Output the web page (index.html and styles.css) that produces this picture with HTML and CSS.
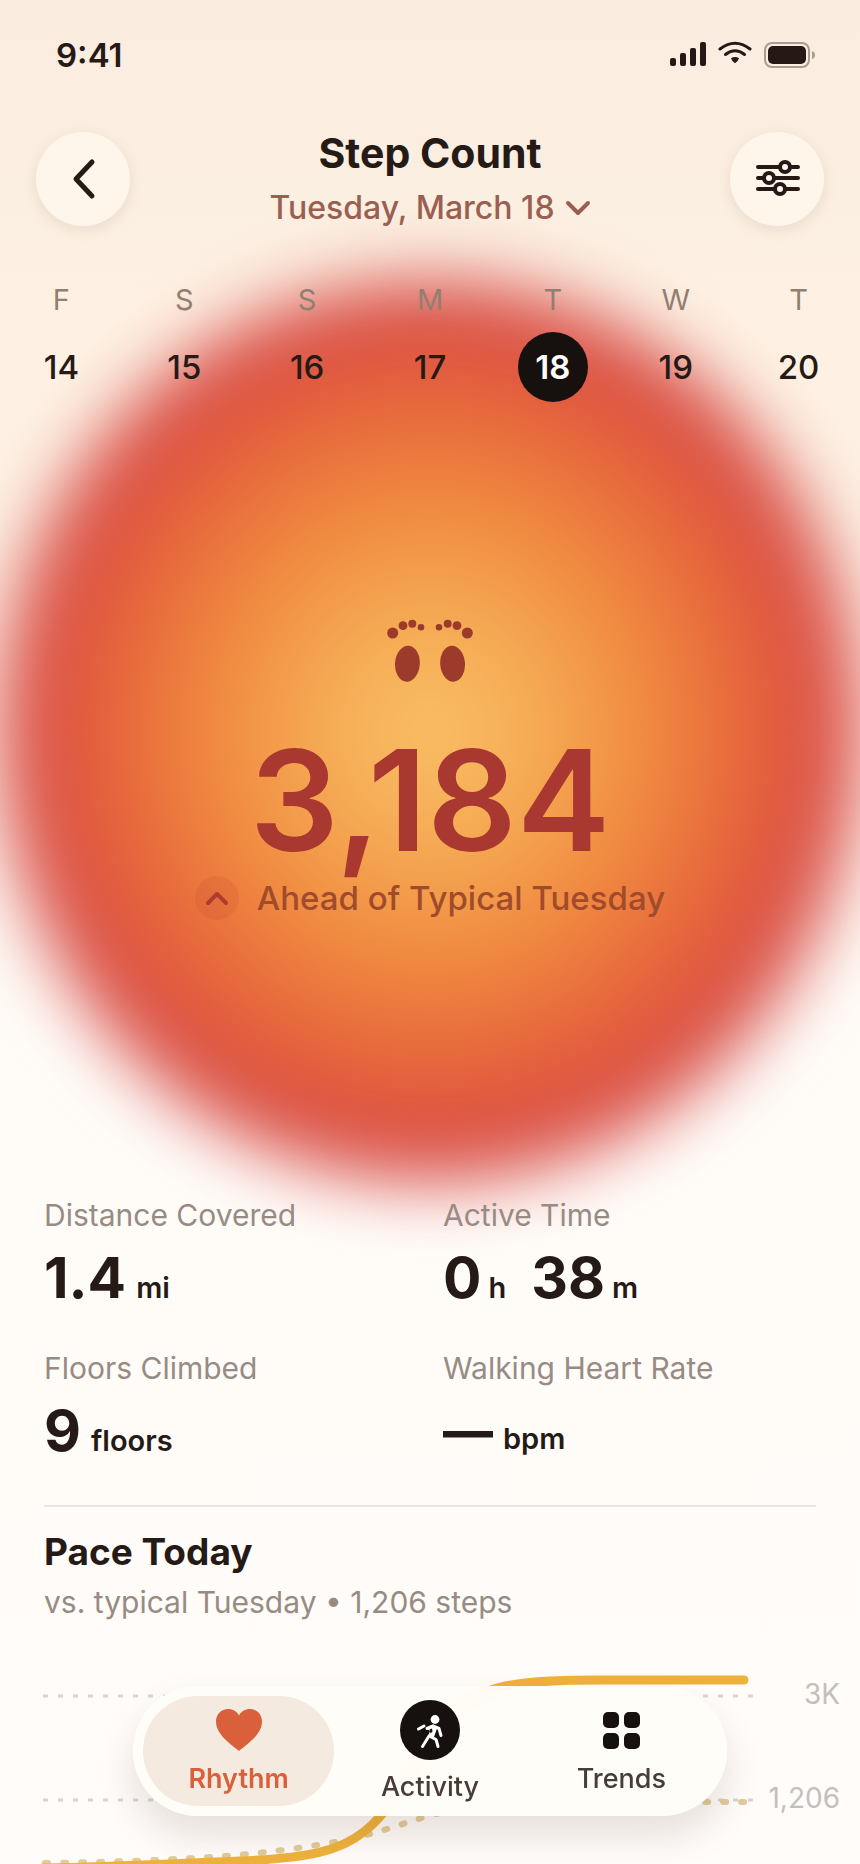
FILE: index.html
```html
<!DOCTYPE html>
<html lang="en">
<head>
  <meta charset="UTF-8">
  <meta name="viewport" content="width=device-width, initial-scale=1">
  <title>Step Count</title>
  <link rel="stylesheet" href="styles.css">
</head>
<body>

<div class="screen">
  <div class="orb"></div>

  <div class="status-bar">
    <span class="time">9:41</span>
    <svg class="status-icons" width="146" height="28" viewBox="0 0 146 28" aria-hidden="true">
      <g fill="#251815">
        <rect x="0" y="17" width="6" height="8" rx="2"/>
        <rect x="10" y="12" width="6" height="13" rx="2"/>
        <rect x="20" y="7" width="6" height="18" rx="2"/>
        <rect x="30" y="1" width="6" height="24" rx="2"/>
        <path d="M61 17.200Q65 14.800 69 17.200Q68.500 19.500 65 22.200Q61.500 19.500 61 17.200Z"/>
        <rect x="98" y="5" width="38" height="18" rx="5"/>
      </g>
      <g fill="none" stroke="#251815" stroke-width="3" stroke-linecap="round">
        <path d="M50 8Q65 -3.500 80 8"/>
        <path d="M55.500 13.500Q65 6 74.500 13.500"/>
      </g>
      <rect x="95" y="2" width="44" height="24" rx="7" fill="none" stroke="#a99c92" stroke-width="2"/>
      <path d="M142 10Q145 11 145 14T142 18Z" fill="#a99c92"/>
    </svg>
  </div>

  <header class="header">
    <button class="round-btn" aria-label="Back">
      <svg width="46" height="46" viewBox="0 0 46 46" aria-hidden="true">
        <path d="M32 6L16 23L32 40" fill="none" stroke="#251b14" stroke-width="5" stroke-linecap="round" stroke-linejoin="round"/>
      </svg>
    </button>
    <div class="heading">
      <h1>Step Count</h1>
      <button class="date-btn">
        Tuesday, March 18
        <svg width="26" height="16" viewBox="0 0 26 16" aria-hidden="true">
          <path d="M3 3L13 13L23 3" fill="none" stroke="#9a5f50" stroke-width="4" stroke-linecap="round" stroke-linejoin="round"/>
        </svg>
      </button>
    </div>
    <button class="round-btn" aria-label="Filters">
      <svg width="46" height="46" viewBox="0 0 46 46" aria-hidden="true">
        <g stroke="#251815" stroke-width="4" stroke-linecap="round">
          <path d="M4 11H44M4 22H44M4 33H44"/>
        </g>
        <g fill="#fef6ea" stroke="#251815" stroke-width="4">
          <circle cx="31" cy="11" r="5"/>
          <circle cx="15" cy="22" r="5"/>
          <circle cx="26" cy="33" r="5"/>
        </g>
      </svg>
    </button>
  </header>

  <nav class="week" aria-label="Days">
    <a href="#" class="day"><span class="weekday">F</span><span class="num">14</span></a>
    <a href="#" class="day"><span class="weekday">S</span><span class="num">15</span></a>
    <a href="#" class="day"><span class="weekday">S</span><span class="num">16</span></a>
    <a href="#" class="day"><span class="weekday">M</span><span class="num">17</span></a>
    <a href="#" class="day active"><span class="weekday">T</span><span class="num">18</span></a>
    <a href="#" class="day"><span class="weekday">W</span><span class="num">19</span></a>
    <a href="#" class="day"><span class="weekday">T</span><span class="num">20</span></a>
  </nav>

  <section class="hero">
    <svg class="feet" width="90" height="64" viewBox="0 0 90 64" fill="#9c3a2b" aria-hidden="true">
      <circle cx="7.700" cy="15" r="5.500"/>
      <circle cx="18" cy="7.700" r="4.400"/>
      <circle cx="27.300" cy="5.700" r="4"/>
      <circle cx="36" cy="9.300" r="3.300"/>
      <ellipse cx="22.400" cy="45.700" rx="12.400" ry="18" transform="rotate(4 22.400 45.700)"/>
      <circle cx="82.300" cy="15" r="5.500"/>
      <circle cx="72" cy="7.700" r="4.400"/>
      <circle cx="62.700" cy="5.700" r="4"/>
      <circle cx="54" cy="9.300" r="3.300"/>
      <ellipse cx="67.600" cy="45.700" rx="12.400" ry="18" transform="rotate(-4 67.600 45.700)"/>
    </svg>
    <div class="steps">3,184</div>
    <div class="compare">
      <span class="up">
        <svg width="24" height="16" viewBox="0 0 24 16" aria-hidden="true">
          <path d="M3 13L12 4L21 13" fill="none" stroke="#b03a30" stroke-width="4" stroke-linecap="round" stroke-linejoin="round"/>
        </svg>
      </span>
      <span>Ahead of Typical Tuesday</span>
    </div>
  </section>

  <section class="stats">
    <div class="stat">
      <div class="label">Distance Covered</div>
      <div class="value"><span>1.4</span><small>mi</small></div>
    </div>
    <div class="stat">
      <div class="label">Active Time</div>
      <div class="value time-value"><span>0</span><small>h</small><span class="minutes">38</span><small>m</small></div>
    </div>
    <div class="stat">
      <div class="label">Floors Climbed</div>
      <div class="value"><span>9</span><small>floors</small></div>
    </div>
    <div class="stat">
      <div class="label">Walking Heart Rate</div>
      <div class="value"><span class="empty">—</span><small>bpm</small></div>
    </div>
  </section>

  <hr>

  <section class="pace">
    <h2>Pace Today</h2>
    <p>vs. typical Tuesday • 1,206 steps</p>
  </section>

  <svg class="chart" viewBox="0 0 860 204" role="img" aria-label="Steps today against a typical Tuesday">
    <g stroke="#d9d4d2" stroke-width="3" stroke-dasharray="5 10">
      <path d="M43 36H755"/>
      <path d="M43 140H755"/>
    </g>
    <path class="typical" d="M45 203C110 202 170 200 225 196C275 192 315 186 345 180C385 172 410 160 440 153C480 142 540 142 748 142"/>
    <path class="today" d="M43 208C110 207 165 204 240 201C310 198 340 191 365 171C400 143 420 90 450 58C480 24 515 20 600 20L744 20"/>
    <g class="axis">
      <text x="840" y="44">3K</text>
      <text x="840" y="148">1,206</text>
    </g>
  </svg>
</div>

<nav class="tabs" aria-label="Sections">
  <button class="tab active">
    <svg width="50" height="44" viewBox="0 0 50 44" aria-hidden="true">
      <path d="M25 43C18 37 2 27 2 13.500C2 6 7.500 1 14 1C19 1 23 3.500 25 7.500C27 3.500 31 1 36 1C42.500 1 48 6 48 13.500C48 27 32 37 25 43Z" fill="#d9603a"/>
    </svg>
    <span>Rhythm</span>
  </button>
  <button class="tab">
    <svg width="60" height="60" viewBox="0 0 60 60" aria-hidden="true">
      <circle cx="30" cy="30" r="30" fill="#16100e"/>
      <circle cx="35" cy="19.500" r="4.400" fill="#fff"/>
      <path d="M26 28L33 24.500L37.500 27L34 37L27.500 37.500L30 31Z" fill="#fff"/>
      <g fill="none" stroke="#fff" stroke-width="3" stroke-linecap="round" stroke-linejoin="round">
        <path d="M18.500 29L24 26"/>
        <path d="M27 28.500L33 26L39 28.500L41 35.500"/>
        <path d="M29 36L22.500 46.500M31 37L36 39.500L38 46.500"/>
      </g>
      <path d="M32 28.500L32.500 31.500L30.500 33.500L29.500 29.500Z" fill="#16100e"/>
    </svg>
    <span>Activity</span>
  </button>
  <button class="tab">
    <svg width="44" height="44" viewBox="0 0 44 44" fill="#16100e" aria-hidden="true">
      <rect x="4" y="4" width="16" height="16" rx="5"/>
      <rect x="25" y="4" width="16" height="16" rx="5"/>
      <rect x="4" y="25" width="16" height="16" rx="5"/>
      <rect x="25" y="25" width="16" height="16" rx="5"/>
    </svg>
    <span>Trends</span>
  </button>
</nav>

</body>
</html>
```

FILE: styles.css
```css
:root {
  --ink: #251a16;
  --muted: #978b83;
  --accent: #d9603a;
}

* {
  box-sizing: border-box;
}

body {
  margin: 0;
  font-family: Inter, "Liberation Sans", sans-serif;
  color: var(--ink);
  background: #fffcf9;
}

h1, h2, p {
  margin: 0;
}

button {
  font: inherit;
  color: inherit;
  border: 0;
  padding: 0;
  background: none;
  cursor: pointer;
}

svg {
  display: block;
}

.screen {
  position: relative;
  z-index: 0;
  overflow: hidden;
  min-height: 100vh;
  background: linear-gradient(#fbece0 0, #fbefe1 200px, #fef1e3 320px, #fdf1e4 560px, #fffcf8 1050px, #fffcf9 100%);
}

/* glowing disc behind the week and the step count */
.orb {
  position: absolute;
  z-index: -1;
  top: 280px;
  left: 0;
  width: 100%;
  aspect-ratio: 20 / 21;
  border-radius: 50%;
  background: radial-gradient(closest-side, #f9c267 0, #f5a852 28%, #f0883f 52%, #e5603c 78%, #d94f44 91%, #d64b50 100%);
  filter: blur(34px);
}

.status-bar {
  display: flex;
  justify-content: space-between;
  align-items: center;
  height: 110px;
  padding: 0 44px 0 56px;
}

.time {
  font-size: 33px;
  font-weight: 600;
}

.header {
  display: flex;
  justify-content: space-between;
  align-items: center;
  margin-top: 18px;
  padding: 0 36px;
}

.round-btn {
  display: flex;
  justify-content: center;
  align-items: center;
  width: 94px;
  height: 94px;
  border-radius: 50%;
  background: #fef6ea;
  box-shadow: 0 4px 14px rgba(120, 80, 50, 0.12);
}

.heading {
  display: flex;
  flex-direction: column;
  align-items: center;
  gap: 8px;
}

h1 {
  font-size: 41px;
  line-height: 50px;
  font-weight: 700;
}

.date-btn {
  display: flex;
  align-items: center;
  gap: 10px;
  font-size: 32px;
  line-height: 44px;
  font-weight: 500;
  color: #9a5f50;
}

.week {
  display: grid;
  grid-template-columns: repeat(7, 1fr);
  margin-top: 52px;
}

.day {
  display: flex;
  flex-direction: column;
  align-items: center;
  gap: 14px;
  color: var(--ink);
  text-decoration: none;
}

.weekday {
  font-size: 29px;
  line-height: 36px;
  color: #8f8072;
}

.num {
  width: 70px;
  border-radius: 50%;
  font-size: 33px;
  line-height: 70px;
  font-weight: 500;
  text-align: center;
}

.day.active .num {
  background: #16100e;
  color: #fff;
  font-weight: 600;
}

.hero {
  display: flex;
  flex-direction: column;
  align-items: center;
  margin-top: 216px;
}

.steps {
  margin-top: 46px;
  font-size: 140px;
  line-height: 144px;
  font-weight: 600;
  color: #a83830;
}

.compare {
  display: flex;
  align-items: center;
  gap: 18px;
  margin-top: 4px;
  font-size: 33px;
  line-height: 44px;
  font-weight: 500;
  color: #9f4b2c;
}

.up {
  display: flex;
  justify-content: center;
  align-items: center;
  width: 44px;
  height: 44px;
  border-radius: 50%;
  background: rgba(200, 70, 50, 0.18);
}

.stats {
  display: grid;
  grid-template-columns: 1fr 1fr;
  gap: 40px 26px;
  margin-top: 277px;
  padding: 0 44px;
}

.label {
  font-size: 30px;
  line-height: 36px;
  color: var(--muted);
}

.value {
  display: flex;
  align-items: baseline;
  gap: 10px;
  margin-top: 13px;
  font-size: 57px;
  line-height: 64px;
  font-weight: 700;
}

.value small {
  font-size: 29px;
  line-height: 36px;
  font-weight: 600;
}

.time-value {
  gap: 7px;
}

.minutes {
  margin-left: 18px;
}

.empty {
  font-size: 50px;
  font-weight: 800;
}

hr {
  margin: 42px 44px 0;
  border: 0;
  border-top: 2px solid #e9e4e1;
}

.pace {
  margin-top: 21px;
  padding: 0 44px;
}

h2 {
  font-size: 37px;
  line-height: 48px;
  font-weight: 700;
}

.pace p {
  margin-top: 8px;
  font-size: 30px;
  line-height: 36px;
  color: var(--muted);
}

.chart {
  width: 100%;
  margin-top: 40px;
}

.today {
  fill: none;
  stroke: #eeb23c;
  stroke-width: 9;
  stroke-linecap: round;
}

.typical {
  fill: none;
  stroke: #e0cd9a;
  stroke-width: 6;
  stroke-linecap: round;
  stroke-dasharray: 3 15;
}

.axis text {
  font-size: 28px;
  fill: #c4bfbd;
  text-anchor: end;
}

/* floating tab bar */
.tabs {
  position: fixed;
  z-index: 10;
  left: 0;
  right: 0;
  bottom: 48px;
  display: flex;
  width: 594px;
  max-width: 96%;
  margin: 0 auto;
  padding: 10px;
  border-radius: 65px;
  background: rgba(255, 253, 248, 0.96);
  backdrop-filter: blur(10px);
  box-shadow: 0 20px 36px rgba(90, 50, 50, 0.14);
}

.tab {
  flex: 1;
  display: flex;
  flex-direction: column;
  justify-content: center;
  align-items: center;
  gap: 12px;
  height: 110px;
  border-radius: 55px;
  font-size: 27px;
  line-height: 30px;
  font-weight: 500;
  color: #483c37;
}

.tab.active {
  background: #f4eadf;
  color: var(--accent);
  font-weight: 600;
}
```
